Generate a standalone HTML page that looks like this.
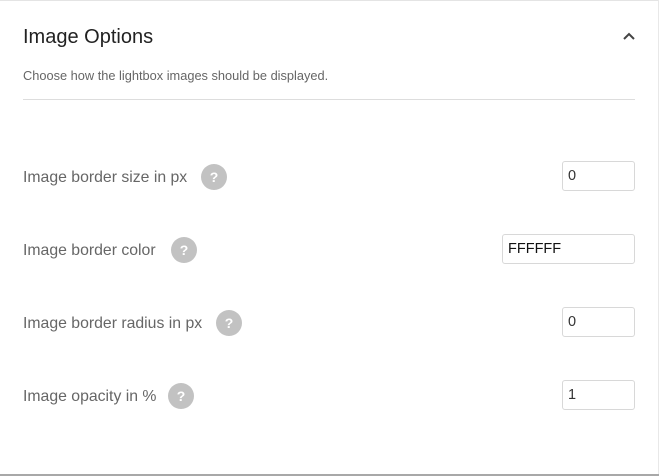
<!DOCTYPE html>
<html><head><style>
body{margin:0;width:659px;height:476px;background:#fff;font-family:"Liberation Sans",sans-serif;position:relative;overflow:hidden}
.top{position:absolute;left:0;top:0;width:659px;height:1px;background:#e4e4e4}
.bot{position:absolute;left:0;top:474px;width:659px;height:2px;background:#a8a8a8}
.r{position:absolute;right:0;top:0;width:1px;height:476px;background:#e8e8e8}
h1{position:absolute;left:23px;top:26px;margin:0;font-size:20px;font-weight:normal;color:#222}
.sub{position:absolute;left:23px;top:68px;font-size:12.8px;color:#666}
.hr{position:absolute;left:23px;top:99px;width:612px;height:1px;background:#ddd}
.lbl{position:absolute;left:23px;font-size:15.8px;color:#666;line-height:20px}
.q{position:absolute;width:26px;height:26px;border-radius:50%;background:#c2c2c2;color:#fff;font-weight:bold;font-size:14px;text-align:center;line-height:26px}
.in{position:absolute;height:28px;border:1px solid #d8d8d8;border-radius:3px;font-size:14.5px;line-height:29px;padding-left:5px;box-sizing:content-box}
</style></head><body>
<div class="top"></div><div class="r"></div><div class="bot"></div>
<h1>Image Options</h1>
<svg style="position:absolute;left:622px;top:31px" width="14" height="10"><path d="M2 8 L7 3 L12 8" fill="none" stroke="#444" stroke-width="2"/></svg>
<div class="sub">Choose how the lightbox images should be displayed.</div>
<div class="hr"></div>
<div class="lbl" style="top:168px">Image border size in px</div><div class="q" style="left:201px;top:164px">?</div>
<div class="in" style="left:562px;top:161px;width:66px;color:#333">0</div>
<div class="lbl" style="top:241px">Image border color</div><div class="q" style="left:171px;top:237px">?</div>
<div class="in" style="left:502px;top:234px;width:126px;color:#111">FFFFFF</div>
<div class="lbl" style="top:314px">Image border radius in px</div><div class="q" style="left:216px;top:310px">?</div>
<div class="in" style="left:562px;top:307px;width:66px;color:#333">0</div>
<div class="lbl" style="top:387px">Image opacity in %</div><div class="q" style="left:168px;top:383px">?</div>
<div class="in" style="left:562px;top:380px;width:66px;color:#333">1</div>
</body></html>
